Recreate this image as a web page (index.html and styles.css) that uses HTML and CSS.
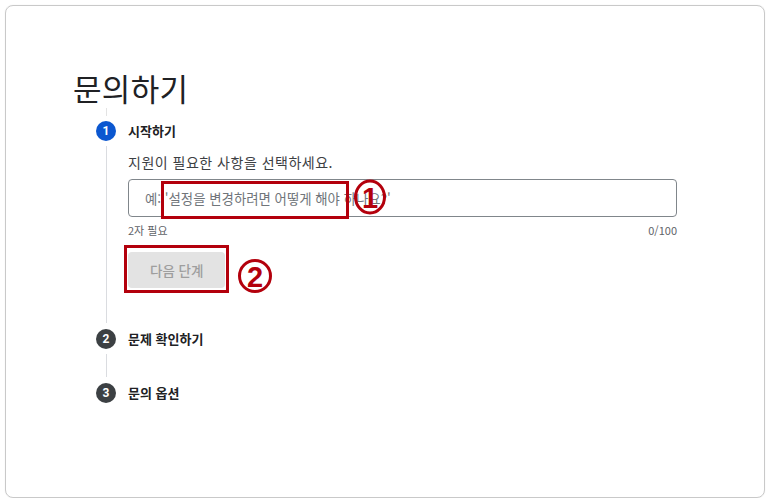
FILE: index.html
```html
<!DOCTYPE html>
<html lang="ko">
<head>
<meta charset="utf-8">
<title>문의하기</title>
<link rel="stylesheet" href="styles.css">
</head>
<body>
<div class="card">
  <h1 class="title">문의하기</h1>
  <div class="stepper">
    <div class="stub"><span class="stub-line"></span></div>
    <div class="step step-active">
      <div class="rail">
        <span class="num num-blue">1</span>
        <span class="line"></span>
      </div>
      <div class="content">
        <div class="label">시작하기</div>
        <p class="desc">지원이 필요한 사항을 선택하세요.</p>
        <div class="field">
          <input class="input" type="text" placeholder="예: '설정을 변경하려면 어떻게 해야 하나요?'">
        </div>
        <div class="counter"><span>2자 필요</span><span>0/100</span></div>
        <button class="next" type="button">다음 단계</button>
      </div>
    </div>
    <div class="step step-two">
      <div class="rail">
        <span class="num">2</span>
        <span class="line"></span>
      </div>
      <div class="content">
        <div class="label">문제 확인하기</div>
      </div>
    </div>
    <div class="step step-last">
      <div class="rail">
        <span class="num">3</span>
      </div>
      <div class="content">
        <div class="label">문의 옵션</div>
      </div>
    </div>
  </div>

  <div class="mark mark-box1"></div>
  <div class="mark mark-box2"></div>
  <svg class="mark circ circ1" width="36" height="38" viewBox="0 0 36 38">
    <ellipse cx="18" cy="19" rx="14.5" ry="16" fill="none" stroke="#b3000c" stroke-width="3"/>
    <text x="18" y="30" text-anchor="middle" class="circ-num">1</text>
  </svg>
  <svg class="mark circ circ2" width="38" height="38" viewBox="0 0 38 38">
    <ellipse cx="19" cy="19" rx="15.5" ry="15.5" fill="none" stroke="#b3000c" stroke-width="3"/>
    <text x="19" y="29.5" text-anchor="middle" class="circ-num">2</text>
  </svg>
</div>
</body>
</html>
```

FILE: styles.css
```css
* { box-sizing: border-box; }

html, body {
  margin: 0;
  padding: 0;
  background: #ffffff;
}

body {
  font-family: "Noto Sans CJK KR", "Noto Sans", Roboto, sans-serif;
  color: #202124;
}

.card {
  position: relative;
  margin: 5px 0 0 5px;
  width: 760px;
  height: 493px;
  border: 1px solid #c9c9c9;
  border-radius: 8px;
  box-shadow: 0 0 1px rgba(0,0,0,0.15);
  padding: 62px 0 0 67px;
}

.title {
  margin: 0;
  font-size: 31px;
  line-height: 40px;
  font-weight: 400;
  color: #202124;
  letter-spacing: 0.3px;
}

.stepper {
  margin-left: 23px;
  width: 560px;
}

.stub {
  width: 20px;
  height: 13px;
  display: flex;
  justify-content: center;
}

.stub-line {
  width: 1px;
  height: 8px;
  background: #e3e3e3;
}

.step {
  display: flex;
  column-gap: 12px;
}

.rail {
  width: 20px;
  flex: none;
  display: flex;
  flex-direction: column;
  align-items: center;
}

.num {
  width: 20px;
  height: 20px;
  border-radius: 50%;
  background: #3c4043;
  color: #ffffff;
  font-family: Roboto, "Liberation Sans", sans-serif;
  font-weight: 700;
  font-size: 12px;
  line-height: 20px;
  text-align: center;
  flex: none;
}

.num-blue {
  background: #0b57d0;
}

.line {
  flex: 1;
  width: 1px;
  background: #dadce0;
  margin: 5px 0 6px;
}

.content {
  flex: 1;
  display: flex;
  flex-direction: column;
  align-items: flex-start;
}

.step-active .content {
  padding-bottom: 41px;
}

.step-two .content {
  padding-bottom: 34px;
}

.label {
  font-size: 13px;
  line-height: 20px;
  font-weight: 700;
  color: #202124;
}

.desc {
  margin: 11px 0 0;
  font-size: 14px;
  line-height: 20px;
  color: #3c4043;
  letter-spacing: 0.5px;
}

.field {
  margin-top: 7px;
  width: 549px;
}

.input {
  display: block;
  width: 100%;
  height: 38px;
  border: 1px solid #80868b;
  border-radius: 4px;
  padding: 0 16px;
  font-family: "Noto Sans CJK KR", "Noto Sans", sans-serif;
  font-size: 13.4px;
  color: #202124;
  background: #ffffff;
  outline: none;
}

.input::placeholder {
  color: #70757a;
}

.counter {
  margin-top: 5px;
  width: 549px;
  display: flex;
  justify-content: space-between;
  font-size: 11px;
  line-height: 16px;
  color: #5f6368;
}

.next {
  margin-top: 14px;
  height: 36px;
  padding: 0 22px;
  border: none;
  border-radius: 4px;
  background: #e3e3e3;
  color: #9e9e9e;
  font-family: "Noto Sans CJK KR", "Noto Sans", sans-serif;
  font-size: 13.5px;
  font-weight: 500;
}

.mark {
  position: absolute;
}

.mark-box1 {
  left: 155px;
  top: 175px;
  width: 188px;
  height: 38px;
  border: 3px solid #b3000c;
}

.mark-box2 {
  left: 118px;
  top: 239px;
  width: 105px;
  height: 48px;
  border: 3px solid #b3000c;
}

.circ1 {
  left: 346px;
  top: 172px;
}

.circ2 {
  left: 230px;
  top: 251px;
}

.circ-num {
  font-family: "Liberation Sans", Arial, sans-serif;
  font-size: 29px;
  font-weight: 700;
  fill: #b3000c;
}
```
